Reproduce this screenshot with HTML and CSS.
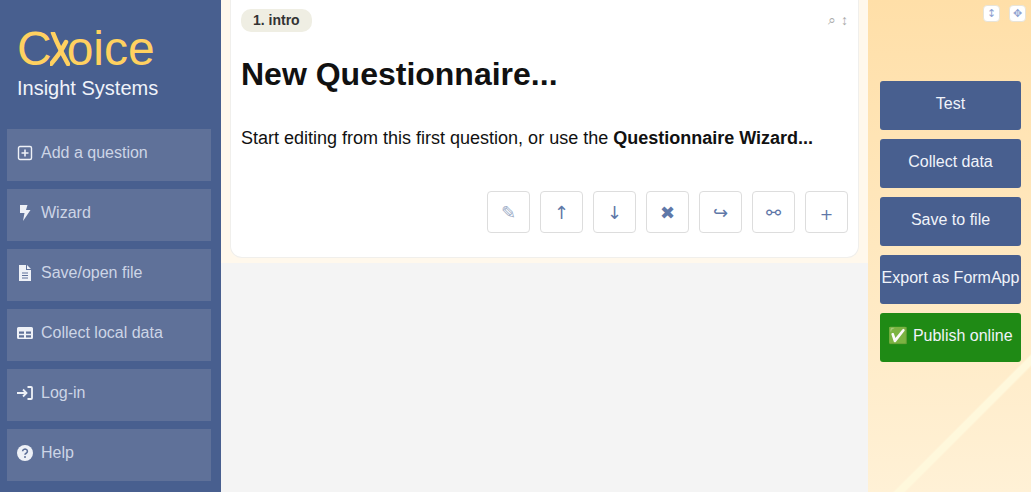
FILE: index.html
```html
<!DOCTYPE html>
<html>
<head>
  <title>Choice Insight Systems</title>
  <link rel="stylesheet" href="styles.css">
</head>
<body>
  <div class="sidebar">
    <div class="logo">
      <div class="logo-name">C<svg class="logo-x" viewBox="0 0 20 34"><path d="M3 1 Q8 14 18 32" /><path d="M16 10 Q10 22 1 32" /></svg>oice</div>
      <div class="logo-sub">Insight Systems</div>
    </div>
    <div class="menu">
      <div class="menu-item">
        <svg class="icon" viewBox="0 0 16 16"><rect x="1.5" y="1.5" width="13" height="13" rx="1.5" fill="none" stroke="currentColor" stroke-width="1.4"/><path d="M8 4.5v7M4.5 8h7" stroke="currentColor" stroke-width="1.6"/></svg>
        <span>Add a question</span>
      </div>
      <div class="menu-item">
        <svg class="icon" viewBox="0 0 16 16"><path d="M3 0h7.5L9 5h4.5L6 16l1.5-8H3z" fill="currentColor"/></svg>
        <span>Wizard</span>
      </div>
      <div class="menu-item">
        <svg class="icon" viewBox="0 0 16 16"><path d="M2 0h7v5h5v11H2zM10 0l4 4h-4z" fill="currentColor"/><path d="M5 8h6M5 10.5h6M5 13h6" stroke="#5f7199" stroke-width="1"/></svg>
        <span>Save/open file</span>
      </div>
      <div class="menu-item">
        <svg class="icon" viewBox="0 0 16 16"><path d="M0 3.5a1.500 1.500 0 0 1 1.500-1.500h13a1.500 1.500 0 0 1 1.500 1.500v9a1.500 1.500 0 0 1-1.500 1.500h-13a1.500 1.500 0 0 1-1.500-1.500z" fill="currentColor"/><path d="M2 6.500h5v2.200h-5zM9 6.500h5v2.200h-5zM2 10.200h5v2.200h-5zM9 10.200h5v2.200h-5z" fill="#5f7199"/></svg>
        <span>Collect local data</span>
      </div>
      <div class="menu-item">
        <svg class="icon" viewBox="0 0 16 16"><path d="M0 8h9M6 4.500l3.500 3.500L6 11.500" fill="none" stroke="currentColor" stroke-width="1.800"/><path d="M10.500 2h3.500a1 1 0 0 1 1 1v10a1 1 0 0 1-1 1h-3.500" fill="none" stroke="currentColor" stroke-width="1.800"/></svg>
        <span>Log-in</span>
      </div>
      <div class="menu-item">
        <svg class="icon" viewBox="0 0 16 16"><circle cx="8" cy="8" r="8" fill="currentColor"/><path d="M5.600 6.200a2.400 2.200 0 1 1 3.600 2c-.8.5-1.200.8-1.200 1.600" fill="none" stroke="#5f7199" stroke-width="1.600"/><circle cx="8" cy="12" r="1" fill="#5f7199"/></svg>
        <span>Help</span>
      </div>
    </div>
  </div>

  <div class="main">
    <div class="question-area">
      <div class="card">
        <div class="card-top">
          <span class="badge">1. intro</span>
          <div class="card-tools">
            <span class="tool-zoom">⌕</span>
            <span class="tool-move">↕</span>
          </div>
        </div>
        <h1>New Questionnaire...</h1>
        <p class="intro">Start editing from this first question, or use the <b>Questionnaire Wizard...</b></p>
        <div class="actions">
          <button class="action light">✎</button>
          <button class="action">↑</button>
          <button class="action">↓</button>
          <button class="action">✖</button>
          <button class="action">↪</button>
          <button class="action">⚯</button>
          <button class="action plus">+</button>
        </div>
      </div>
    </div>
  </div>

  <div class="side">
    <div class="side-tools">
      <span class="side-tool">↕</span>
      <span class="side-tool">✥</span>
    </div>
    <div class="side-buttons">
      <button class="side-button">Test</button>
      <button class="side-button">Collect data</button>
      <button class="side-button">Save to file</button>
      <button class="side-button">Export as FormApp</button>
      <button class="side-button publish">✅ Publish online</button>
    </div>
  </div>
</body>
</html>
```

FILE: styles.css
```css
* {
  margin: 0;
  padding: 0;
  box-sizing: border-box;
}

body {
  font-family: "Liberation Sans", Arial, sans-serif;
  height: 492px;
  overflow: hidden;
  display: flex;
  background: #f4f4f4;
  color: #111;
}

.sidebar {
  width: 221px;
  flex-shrink: 0;
  background: #485f8f;
  padding: 0 10px 0 7px;
}

.logo {
  height: 129px;
  padding: 22px 0 0 10px;
}

.logo-name {
  display: flex;
  align-items: flex-start;
  color: #ffd160;
  font-size: 48px;
  line-height: 54px;
}

.logo-x {
  width: 20px;
  height: 34px;
  margin: 10px -3px 0 -2px;
  flex-shrink: 0;
  fill: none;
  stroke: #ffd160;
  stroke-width: 4.5;
  stroke-linecap: round;
}

.logo-sub {
  color: #f0f3fa;
  font-size: 20px;
  line-height: 24px;
}

.menu {
  display: flex;
  flex-direction: column;
  gap: 8px;
}

.menu-item {
  height: 52px;
  background: #5f7199;
  color: #cdd5e6;
  font-size: 16px;
  display: flex;
  align-items: center;
  padding: 0 0 4px 10px;
  gap: 8px;
}

.icon {
  width: 16px;
  height: 16px;
  color: #eef1f7;
  flex-shrink: 0;
}

.main {
  width: 647px;
  flex-shrink: 0;
}

.question-area {
  height: 263px;
  background: #fff8ec;
  padding: 0 9px 5px;
}

.card {
  height: 258px;
  background: #fff;
  border: 1px solid #f0efec;
  border-top: 0;
  border-radius: 0 0 12px 12px;
  padding: 9px 10px 0;
}

.card-top {
  display: flex;
  justify-content: space-between;
}

.badge {
  background: #efeee3;
  color: #333;
  font-size: 14px;
  font-weight: bold;
  line-height: 23px;
  padding: 0 12px;
  border-radius: 10px;
}

.card-tools {
  display: flex;
  gap: 5px;
  color: #aaa;
  font-size: 14px;
  line-height: 22px;
}

h1 {
  font-size: 32px;
  line-height: 38px;
  margin-top: 23px;
}

.intro {
  font-size: 18px;
  line-height: 24px;
  margin-top: 33px;
}

.actions {
  display: flex;
  justify-content: flex-end;
  gap: 10px;
  margin-top: 41px;
}

.action {
  width: 43px;
  height: 42px;
  background: #fff;
  border: 1px solid #ddd;
  border-radius: 4px;
  color: #5f78a8;
  font-family: "DejaVu Sans", sans-serif;
  font-size: 18px;
}

.action.light {
  color: #a0aec8;
}

.action.plus {
  font-size: 16px;
  padding-top: 4px;
}

.side {
  flex: 1;
  background-color: #ffeccb;
  background-image:
    linear-gradient(135deg, transparent 365px, #fff8dc 367px, #fff8dc 373px, transparent 375px),
    linear-gradient(180deg, #ffdfa8 0%, #fff1d6 100%);
  padding: 5px 10px 0 12px;
}

.side-tools {
  display: flex;
  justify-content: flex-end;
  gap: 9px;
  margin-right: -5px;
}

.side-tool {
  width: 17px;
  height: 17px;
  background: #fff;
  border: 1px solid #e8e4d8;
  border-radius: 4px;
  color: #8fa2d0;
  font-family: "DejaVu Sans", sans-serif;
  font-size: 11px;
  line-height: 15px;
  text-align: center;
}

.side-buttons {
  display: flex;
  flex-direction: column;
  gap: 9px;
  margin-top: 59px;
}

.side-button {
  height: 49px;
  background: #485f8f;
  border: 0;
  border-radius: 3px;
  color: #f0f3fa;
  font-family: inherit;
  font-size: 16px;
  padding-bottom: 4px;
}

.side-button.publish {
  background: #1f8a15;
}
```
